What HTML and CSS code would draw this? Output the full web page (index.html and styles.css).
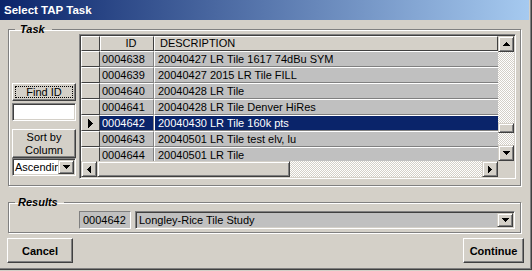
FILE: index.html
```html
<!DOCTYPE html>
<html>
<head>
    <meta charset="utf-8">
    <title>Select TAP Task</title>
    <link rel="stylesheet" href="styles.css">
</head>
<body>
    <div class="window">
        <div class="titlebar">Select TAP Task</div>

        <fieldset class="group task-group">
            <legend class="task-legend">Task</legend>
            <div class="task-body">
                <div class="side">
                    <button class="btn find-btn"><span class="focus">Find ID</span></button>
                    <input class="field find-input" type="text">
                    <button class="btn sort-btn">Sort by<br>Column</button>
                    <div class="combo sort-combo">
                        <span class="combo-text">Ascending</span>
                        <span class="scroll-btn drop">
                            <svg width="7" height="4" viewBox="0 0 7 4"><path d="M0 0h7v1H0zM1 1h5v1H1zM2 2h3v1H2zM3 3h1v1H3z"/></svg>
                        </span>
                    </div>
                </div>

                <div class="grid">
                    <div class="grid-main">
                        <div class="grid-row grid-head">
                            <div class="sel"></div>
                            <div class="cid">ID</div>
                            <div class="cdesc">DESCRIPTION</div>
                        </div>
                        <div class="grid-row">
                            <div class="sel"></div>
                            <div class="cid">0004638</div>
                            <div class="cdesc">20040427 LR Tile 1617 74dBu SYM</div>
                        </div>
                        <div class="grid-row">
                            <div class="sel"></div>
                            <div class="cid">0004639</div>
                            <div class="cdesc">20040427 2015 LR Tile FILL</div>
                        </div>
                        <div class="grid-row">
                            <div class="sel"></div>
                            <div class="cid">0004640</div>
                            <div class="cdesc">20040428 LR Tile</div>
                        </div>
                        <div class="grid-row">
                            <div class="sel"></div>
                            <div class="cid">0004641</div>
                            <div class="cdesc">20040428 LR Tile Denver HiRes</div>
                        </div>
                        <div class="grid-row selected">
                            <div class="sel">
                                <svg width="5" height="9" viewBox="0 0 5 9"><path d="M0 0h1v9H0zM1 1h1v7H1zM2 2h1v5H2zM3 3h1v3H3zM4 4h1v1H4z"/></svg>
                            </div>
                            <div class="cid">0004642</div>
                            <div class="cdesc">20040430 LR Tile 160k pts</div>
                        </div>
                        <div class="grid-row">
                            <div class="sel"></div>
                            <div class="cid">0004643</div>
                            <div class="cdesc">20040501 LR Tile test elv, lu</div>
                        </div>
                        <div class="grid-row">
                            <div class="sel"></div>
                            <div class="cid">0004644</div>
                            <div class="cdesc">20040501 LR Tile</div>
                        </div>
                    </div>

                    <div class="vscroll">
                        <span class="scroll-btn">
                            <svg width="7" height="4" viewBox="0 0 7 4"><path d="M3 0h1v1H3zM2 1h3v1H2zM1 2h5v1H1zM0 3h7v1H0z"/></svg>
                        </span>
                        <div class="track vtrack"><span class="thumb vthumb"></span></div>
                        <span class="scroll-btn">
                            <svg width="7" height="4" viewBox="0 0 7 4"><path d="M0 0h7v1H0zM1 1h5v1H1zM2 2h3v1H2zM3 3h1v1H3z"/></svg>
                        </span>
                    </div>

                    <div class="hscroll">
                        <span class="scroll-btn">
                            <svg width="4" height="7" viewBox="0 0 4 7"><path d="M3 0h1v7H3zM2 1h1v5H2zM1 2h1v3H1zM0 3h1v1H0z"/></svg>
                        </span>
                        <span class="thumb hthumb"></span>
                        <div class="track htrack"></div>
                        <span class="scroll-btn">
                            <svg width="4" height="7" viewBox="0 0 4 7"><path d="M0 0h1v7H0zM1 1h1v5H1zM2 2h1v3H2zM3 3h1v1H3z"/></svg>
                        </span>
                    </div>

                    <div class="corner"></div>
                </div>
            </div>
        </fieldset>

        <fieldset class="group results-group">
            <legend class="results-legend">Results</legend>
            <div class="results-body">
                <div class="static-field">0004642</div>
                <div class="combo result-combo">
                    <span class="combo-text">Longley-Rice Tile Study</span>
                    <span class="scroll-btn drop">
                        <svg width="7" height="4" viewBox="0 0 7 4"><path d="M0 0h7v1H0zM1 1h5v1H1zM2 2h3v1H2zM3 3h1v1H3z"/></svg>
                    </span>
                </div>
            </div>
        </fieldset>

        <div class="actions">
            <button class="btn action-btn cancel-btn">Cancel</button>
            <button class="btn action-btn continue-btn">Continue</button>
        </div>
    </div>
</body>
</html>
```

FILE: styles.css
```css
/* Base */
* { box-sizing: border-box; }
html, body { margin: 0; padding: 0; }

body {
    width: 532px;
    height: 271px;
    overflow: hidden;
    background: #d4d0c8;
    color: #000;
    font-family: "Liberation Sans", Arial, sans-serif;
    font-size: 11px;
}

svg { display: block; fill: #000; }

/* Window frame */
.window {
    width: 532px;
    height: 270px;
    box-shadow: inset -1px -1px #404040, inset -2px -2px #808080;
}

.titlebar {
    height: 20px;
    margin-right: 3px;
    padding: 1px 0 0 4px;
    background: linear-gradient(to right, #0a246a, #a6caf0);
    color: #fff;
    font-size: 11.5px;
    font-weight: bold;
    line-height: 19px;
}

/* Etched group boxes */
.group {
    margin: 0 0 0 8px;
    width: 513px;
    min-width: 0;
    padding: 0 0 0 3px;
    border: 1px solid #808080;
    box-shadow: inset 1px 1px #fff, 1px 1px #fff;
}

.group legend {
    margin-left: 3px;
    font-size: 11px;
    font-weight: bold;
    font-style: italic;
    line-height: 11px;
    height: 11px;
}

.task-group {
    margin-top: 4px;
    height: 162px;
}
.task-legend { padding: 0 7px 0 5px; }

.results-group {
    margin-top: 11px;
    height: 36px;
}
.results-legend { padding: 0 6px 0 3px; }

/* Classic 3D controls */
.btn {
    display: block;
    padding: 0;
    background: #d4d0c8;
    border: 1px solid;
    border-color: #fff #404040 #404040 #fff;
    box-shadow: inset -1px -1px #808080;
    font: inherit;
    color: #000;
}

.field {
    display: block;
    border: 1px solid;
    border-color: #808080 #fff #fff #808080;
    box-shadow: inset 1px 1px #404040, inset -1px -1px #d4d0c8;
    background: #fff;
    outline: none;
}

.combo {
    display: flex;
    padding: 1px;
    border: 1px solid;
    border-color: #808080 #fff #fff #808080;
    box-shadow: inset 1px 1px #404040, inset -1px -1px #d4d0c8;
    background: #fff;
}
.combo-text {
    flex: 1;
    overflow: hidden;
    white-space: nowrap;
    padding-left: 1px;
    line-height: 14px;
}

.scroll-btn {
    display: flex;
    align-items: center;
    justify-content: center;
    width: 16px;
    height: 16px;
    flex: none;
    background: #d4d0c8;
    border: 1px solid;
    border-color: #d4d0c8 #404040 #404040 #d4d0c8;
    box-shadow: inset 1px 1px #fff, inset -1px -1px #808080;
}
.drop { height: 14px; }

.thumb {
    display: block;
    background: #d4d0c8;
    border: 1px solid;
    border-color: #d4d0c8 #404040 #404040 #d4d0c8;
    box-shadow: inset 1px 1px #fff, inset -1px -1px #808080;
}

.track {
    flex: 1;
    background: repeating-conic-gradient(#fff 0 25%, #d4d0c8 0 50%) 0 0 / 2px 2px;
}

/* Task area */
.task-body {
    display: flex;
    gap: 3px;
    margin-top: -1px;
}

.side {
    width: 64px;
    padding-top: 49px;
}

.find-btn {
    display: flex;
    width: 64px;
    height: 18px;
    padding: 2px;
}
.find-btn .focus {
    flex: 1;
    border: 1px dotted #000;
    line-height: 10px;
    text-align: center;
}

.find-input {
    width: 64px;
    height: 18px;
    margin-top: 2px;
}

.sort-btn {
    width: 64px;
    height: 29px;
    margin-top: 8px;
    line-height: 13px;
}

.sort-combo {
    width: 64px;
    height: 18px;
}

/* Data grid */
.grid {
    display: grid;
    grid-template-columns: 417px 16px;
    grid-template-rows: 125px 16px;
    width: 437px;
    height: 145px;
    padding: 1px;
    border: 1px solid;
    border-color: #808080 #fff #fff #808080;
    box-shadow: inset 1px 1px #404040, inset -1px -1px #d4d0c8;
}

.grid-main {
    overflow: hidden;
    background: #c0c0c0;
}

.grid-row {
    display: flex;
    height: 16px;
    line-height: 14px;
    white-space: nowrap;
}

.grid-row .sel {
    display: flex;
    align-items: center;
    justify-content: center;
    width: 19px;
    background: #d4d0c8;
    border: 1px solid;
    border-color: #fff #404040 #404040 #fff;
}

.grid-row .cid {
    width: 54px;
    padding-left: 2px;
    border-top: 1px solid #fff;
    border-bottom: 1px solid #808080;
    border-right: 1px solid #808080;
}

.grid-row .cdesc {
    flex: 1;
    padding-left: 3px;
    border-top: 1px solid #fff;
    border-bottom: 1px solid #808080;
    border-left: 1px solid #fff;
}

.grid-head { height: 15px; line-height: 13px; }
.grid-head .cid,
.grid-head .cdesc {
    background: #d4d0c8;
    border: 1px solid;
    border-color: #fff #404040 #404040 #fff;
}
.grid-head .cid { text-align: center; padding-left: 8px; }
.grid-head .cdesc { padding-left: 5px; }

.selected .cid,
.selected .cdesc {
    background: #0a246a;
    color: #fff;
}

.vscroll {
    display: flex;
    flex-direction: column;
}
.vthumb {
    height: 10px;
    margin-top: 71px;
}

.hscroll { display: flex; }
.hthumb { width: 193px; }

.corner { background: #d4d0c8; }

/* Results */
.results-body {
    display: flex;
    gap: 4px;
    margin-left: 67px;
    padding-top: 3px;
}

.static-field {
    width: 52px;
    height: 18px;
    padding-left: 3px;
    border: 1px solid;
    border-color: #808080 #fff #fff #808080;
    background: #c0c0c0;
    line-height: 16px;
}

.result-combo {
    width: 380px;
    height: 18px;
    background: #c0c0c0;
}
.result-combo .combo-text { padding-left: 2px; }

/* Dialog buttons */
.actions {
    display: flex;
    justify-content: space-between;
    margin-top: 5px;
    padding: 0 8px 0 7px;
}

.action-btn {
    height: 25px;
    font-size: 11px;
    font-weight: bold;
}
.cancel-btn { width: 66px; }
.continue-btn { width: 61px; }
```
